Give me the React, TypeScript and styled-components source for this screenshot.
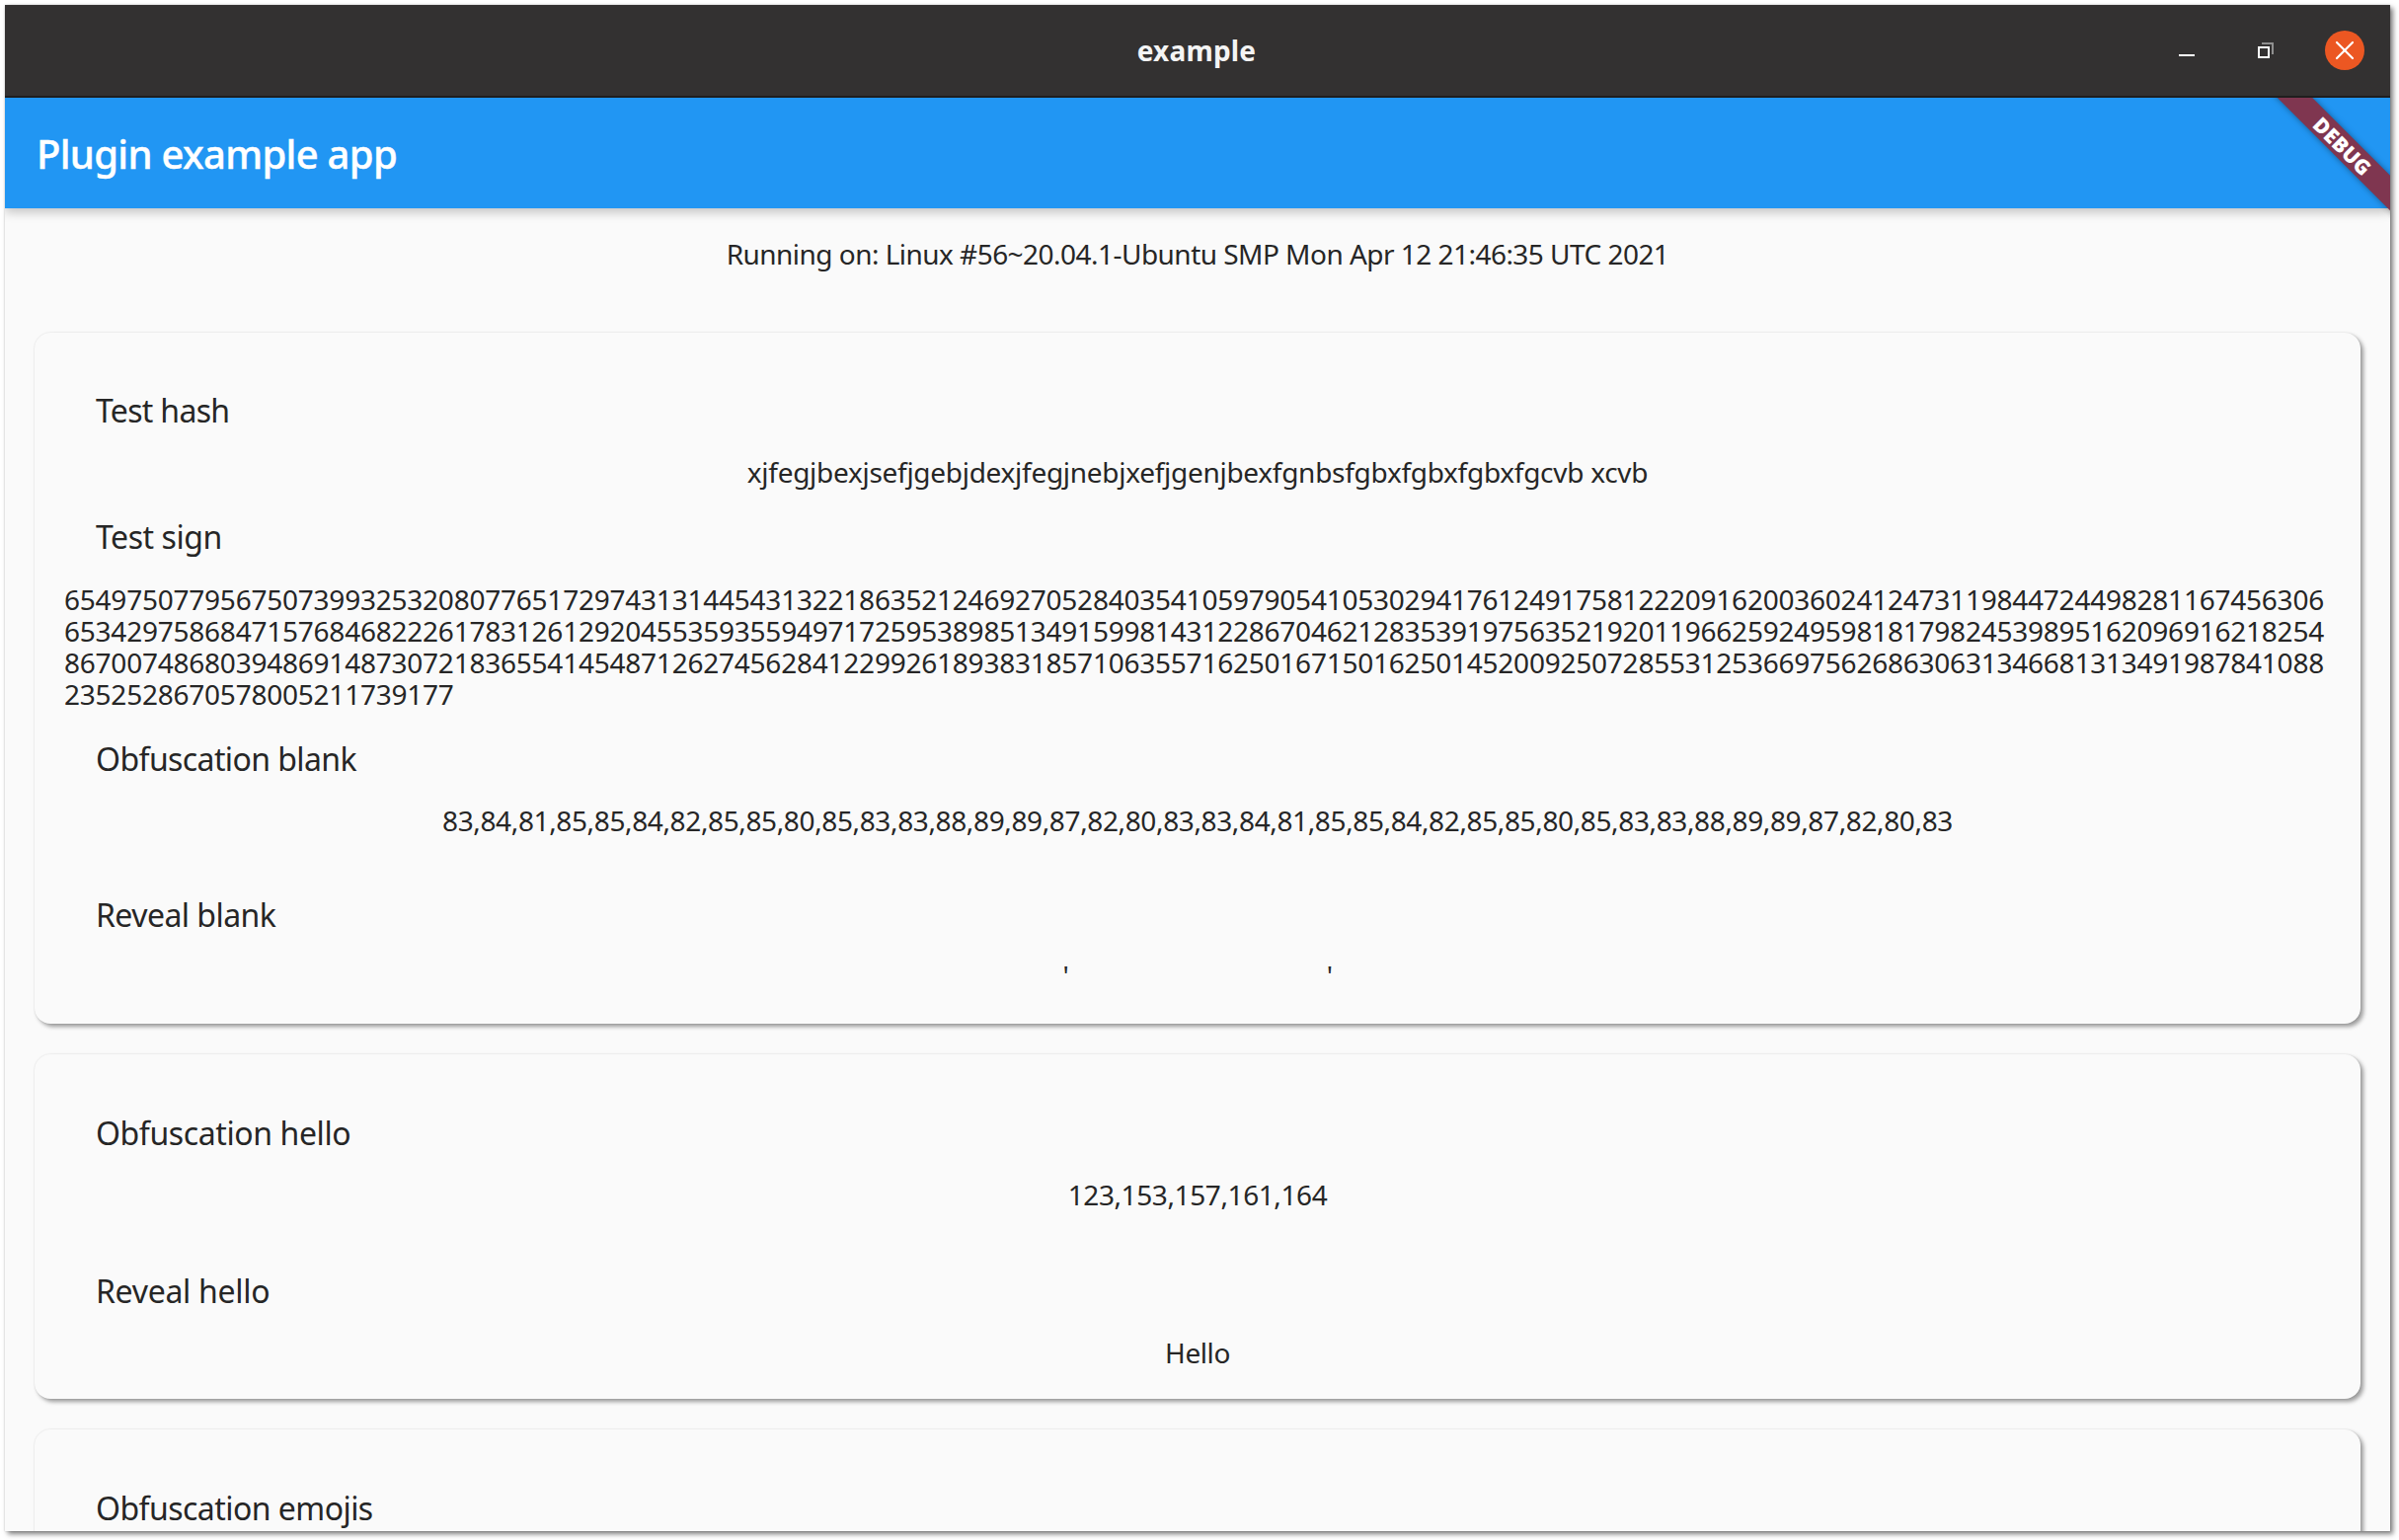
import React from 'react'
import styled, { createGlobalStyle } from 'styled-components';
import { X } from 'lucide-react';

const GlobalStyle = createGlobalStyle`
  html, body {
    margin: 0;
    padding: 0;
    width: 2430px;
    height: 1560px;
    overflow: hidden;
    background: #ffffff;
    font-family: "Noto Sans", "Open Sans", sans-serif;
  }
`;

const Window = styled.div`
  width: 2416px;
  height: 1546px;
  margin: 5px 0 0 5px;
  display: flex;
  flex-direction: column;
  overflow: hidden;
  background: #fafafa;
  box-shadow: 3px 3px 5px rgba(0, 0, 0, 0.5), 0 0 2px rgba(0, 0, 0, 0.2);
`;

const TitleBar = styled.div`
  flex: none;
  height: 92px;
  display: grid;
  grid-template-columns: 1fr auto 1fr;
  align-items: center;
  background: #333131;
  border-bottom: 2px solid #1f1e1e;
`;

const WindowTitle = styled.div`
  grid-column: 2;
  margin-right: 2px;
  color: #f4f4f4;
  font-size: 28px;
  font-weight: 700;
  letter-spacing: 0.2px;
`;

const Controls = styled.div`
  grid-column: 3;
  display: flex;
  align-items: center;
  justify-content: flex-end;
  padding-right: 26px;
`;

const ControlSlot = styled.div`
  width: 40px;
  height: 40px;
  margin-left: 40px;
  display: flex;
  align-items: center;
  justify-content: center;
`;

const CloseButton = styled(ControlSlot)`
  border-radius: 50%;
  background: #ec5722;
  color: #ffffff;
`;

const Content = styled.div`
  position: relative;
  flex: 1;
  min-height: 0;
  overflow: hidden;
`;

const AppBar = styled.div`
  height: 112px;
  display: flex;
  align-items: center;
  padding-left: 32px;
  background: #2196f3;
  color: #ffffff;
  font-size: 40px;
  font-weight: 500;
  letter-spacing: -0.69px;
  -webkit-text-stroke: 0.4px #ffffff;
  box-shadow: 0 4px 10px rgba(0, 0, 0, 0.22);
`;

const DebugBanner = styled.div`
  position: absolute;
  top: 36px;
  right: -52px;
  width: 200px;
  height: 25px;
  display: flex;
  align-items: center;
  justify-content: center;
  transform: rotate(45deg);
  background: #7f3650;
  color: #ffffff;
  font-size: 21px;
  font-weight: 900;
  box-shadow: 0 0 6px rgba(0, 0, 0, 0.4);
`;

const Status = styled.div`
  height: 32px;
  margin-top: 30px;
  line-height: 32px;
  text-align: center;
  color: #262626;
  font-size: 28px;
  letter-spacing: -0.53px;
`;

const Card = styled.div<{ $top: number; $paddingTop: number; $paddingBottom: number }>`
  margin: ${(p) => p.$top}px 30px 0;
  padding: ${(p) => p.$paddingTop}px 0 ${(p) => p.$paddingBottom}px;
  border-radius: 16px;
  background: #fafafa;
  box-shadow: 3px 3px 4px rgba(0, 0, 0, 0.38), 0 0 2px rgba(0, 0, 0, 0.12);
`;

const Label = styled.div<{ $gap?: number; $tracking?: number }>`
  height: 48px;
  margin-top: ${(p) => p.$gap ?? 0}px;
  padding-left: 62px;
  line-height: 50px;
  color: #262626;
  font-size: 32px;
  letter-spacing: ${(p) => p.$tracking ?? -0.45}px;
`;

const Value = styled.div<{ $gap: number; $tracking?: number }>`
  height: 32px;
  margin-top: ${(p) => p.$gap}px;
  line-height: 32px;
  text-align: center;
  color: #262626;
  font-size: 28px;
  letter-spacing: ${(p) => p.$tracking ?? -0.4}px;
  white-space: pre;
`;

const Digits = styled.div`
  margin-top: 24px;
  padding-left: 30px;
  color: #262626;
  font-size: 28px;
  line-height: 32px;
  letter-spacing: -0.23px;
`;

const DigitLine = styled.div`
  height: 32px;
`;

const digitLines = [
  '6549750779567507399325320807765172974313144543132218635212469270528403541059790541053029417612491758122209162003602412473119844724498281167456306',
  '6534297586847157684682226178312612920455359355949717259538985134915998143122867046212835391975635219201196625924959818179824539895162096916218254',
  '8670074868039486914873072183655414548712627456284122992618938318571063557162501671501625014520092507285531253669756268630631346681313491987841088',
  '2352528670578005211739177',
];

const blankReveal = "'" + ' '.repeat(38) + "'";

const App = () => {
  return (
    <>
      <GlobalStyle />
      <Window>
        <TitleBar>
          <WindowTitle>example</WindowTitle>
          <Controls>
            <ControlSlot>
              <svg width="16" height="16" viewBox="0 0 16 16">
                <rect x="0" y="12" width="16" height="2" fill="#ffffff" />
              </svg>
            </ControlSlot>
            <ControlSlot>
              <svg width="16" height="16" viewBox="0 0 16 16">
                <path d="M4 1H15V12" fill="none" stroke="#8f8f8f" strokeWidth="2" />
                <rect x="1" y="5" width="10" height="10" fill="none" stroke="#ffffff" strokeWidth="2" />
              </svg>
            </ControlSlot>
            <CloseButton>
              <X size={32} strokeWidth={1.6} />
            </CloseButton>
          </Controls>
        </TitleBar>
        <Content>
          <AppBar>Plugin example app</AppBar>
          <DebugBanner>DEBUG</DebugBanner>
          <Status>Running on: Linux #56~20.04.1-Ubuntu SMP Mon Apr 12 21:46:35 UTC 2021</Status>
          <Card $top={64} $paddingTop={54} $paddingBottom={33}>
            <Label $tracking={-0.7}>Test hash</Label>
            <Value $gap={23} $tracking={-0.28}>xjfegjbexjsefjgebjdexjfegjnebjxefjgenjbexfgnbsfgbxfgbxfgbxfgcvb xcvb</Value>
            <Label $gap={25}>Test sign</Label>
            <Digits>
              {digitLines.map((line) => (
                <DigitLine key={line}>{line}</DigitLine>
              ))}
            </Digits>
            <Label $gap={25} $tracking={-0.6}>Obfuscation blank</Label>
            <Value $gap={23} $tracking={-0.37}>83,84,81,85,85,84,82,85,85,80,85,83,83,88,89,89,87,82,80,83,83,84,81,85,85,84,82,85,85,80,85,83,83,88,89,89,87,82,80,83</Value>
            <Label $gap={55} $tracking={-0.55}>Reveal blank</Label>
            <Value $gap={22}>{blankReveal}</Value>
          </Card>
          <Card $top={31} $paddingTop={55} $paddingBottom={31}>
            <Label $tracking={-0.4}>Obfuscation hello</Label>
            <Value $gap={23}>123,153,157,161,164</Value>
            <Label $gap={57} $tracking={-0.3}>Reveal hello</Label>
            <Value $gap={23}>Hello</Value>
          </Card>
          <Card $top={31} $paddingTop={55} $paddingBottom={40}>
            <Label $tracking={-0.55}>Obfuscation emojis</Label>
          </Card>
        </Content>
      </Window>
    </>
  )
}

export default App;
